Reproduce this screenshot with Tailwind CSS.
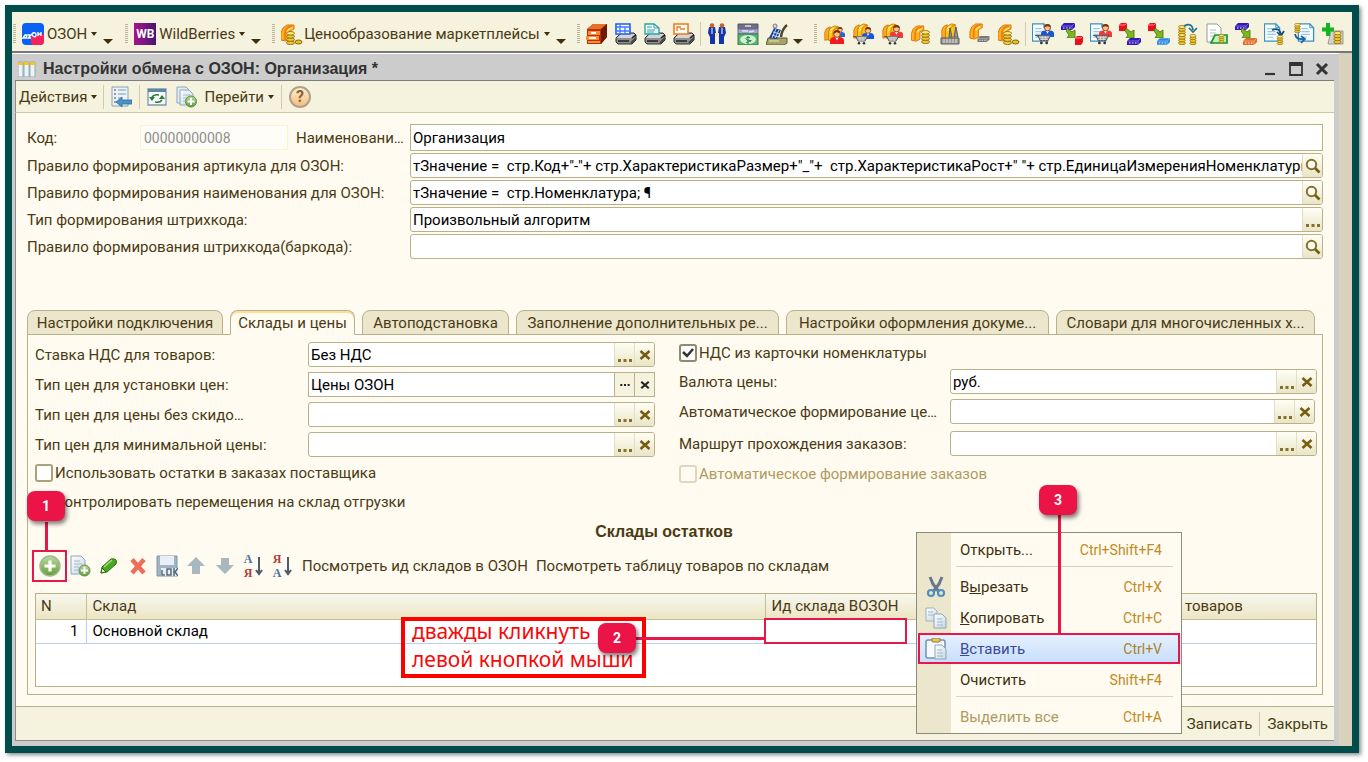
<!DOCTYPE html>
<html lang="ru">
<head>
<meta charset="utf-8">
<title>Настройки обмена с ОЗОН</title>
<script src="https://cdn.jsdelivr.net/npm/@tailwindcss/browser@4"></script>
</head>
<body class="bg-white font-[Roboto,'Liberation_Sans',sans-serif] text-[15px] leading-5 text-[#4a3a14]">

<svg class="absolute size-0" aria-hidden="true">
  <defs>
    <linearGradient id="gGreen" x1="0" y1="0" x2="0" y2="1"><stop offset="0" stop-color="#b9d99b"/><stop offset="1" stop-color="#5fa03a"/></linearGradient>
    <linearGradient id="gDoc" x1="0" y1="0" x2="1" y2="1"><stop offset="0" stop-color="#ffffff"/><stop offset="1" stop-color="#c5d6e2"/></linearGradient>
  </defs>
  <symbol id="books" viewBox="0 0 18 19"><path d="M1 8Q2 3 7 2v14l-6 1z" fill="#ffae1a" stroke="#e06c10"/><path d="M5 8Q6 3 12 1l4 1v13l-6 3-5-1z" fill="#ffc21a" stroke="#c87a10"/><path d="M10 18V8q1-4 6-6" fill="none" stroke="#d98a06" stroke-width="1.300"/><path d="M7 6l4-3M7 9l2-2" stroke="#fff07a" stroke-width="1.500"/></symbol>
  <symbol id="halfbook" viewBox="0 0 18 19"><path d="M1 9Q2 3 7 1h7v4l-4 2v8l-4 2-5-1z" fill="#ffb31a" stroke="#dc7410"/><path d="M5 16V8q1-5 7-6" fill="none" stroke="#f07a18" stroke-width="1.800"/><path d="M7 8q1-3 5-4" stroke="#ffe66a" stroke-width="1.500" fill="none"/></symbol>
  <symbol id="coins" viewBox="0 0 9 14"><g fill="#f0c832" stroke="#80600a" stroke-width=".8"><ellipse cx="4.500" cy="11.800" rx="4" ry="1.800"/><ellipse cx="4.500" cy="8.600" rx="4" ry="1.800"/><ellipse cx="4.500" cy="5.400" rx="4" ry="1.800"/><ellipse cx="4.500" cy="2.300" rx="4" ry="1.800" fill="#ffe878"/></g></symbol>
  <symbol id="cart" viewBox="0 0 16 9"><path d="M0 0l3 1 2 4h7l3-5z" fill="#a4a4a4" stroke="#555"/><path d="M4 2h9M5 4h7M7 1v4M10 1v4" stroke="#e4e4e4" stroke-width=".7"/><circle cx="6" cy="7.300" r="1.300" fill="#333"/><circle cx="11" cy="7.300" r="1.300" fill="#333"/></symbol>
  <symbol id="person" viewBox="0 0 12 12"><path d="M0 12V9q0-3 4-3h4q4 0 4 3v3z" fill="currentColor"/><path d="M4.500 6L6 9l1.500-3z" fill="#fff"/><circle cx="6" cy="3.500" r="2.800" fill="#fbc38c" stroke="#8a3a10" stroke-width=".8"/><path d="M3 3q0-3 3-3t3 3l-3-1z" fill="#7a3210"/></symbol>
  <symbol id="sheet" viewBox="0 0 18 20"><path d="M1 1h12l4 4v14H1z" fill="#f6fcff" stroke="#3a8fc4" stroke-width="1.400"/><path d="M13 1v4h4" fill="none" stroke="#3a8fc4"/><path d="M4 6h7M4 9h9M4 12h9M4 15h6" stroke="#9cc8e4" stroke-width="1.300"/></symbol>
  <symbol id="chip" viewBox="0 0 14 7"><path d="M0 3l3-3h11v4l-3 3H0z" fill="currentColor"/><path d="M0 3h11l3-3M11 3v4" stroke="#fff" stroke-opacity=".5" stroke-width=".7" fill="none"/><path d="M2 5h1.500M5 5h1.500M8 5h1.500" stroke="#fff" stroke-width="1"/></symbol>
  <symbol id="garrow" viewBox="0 0 10 10"><path d="M1 0l5 4 3-2v8H1l2-3-3-4z" fill="#7db81e" stroke="#456f08" stroke-width=".8"/></symbol>
  <symbol id="printer" viewBox="0 0 22 22"><path d="M1 15l5-5h13l2 2v5l-4 4H3l-2-2z" fill="#8f8f8f" stroke="#333"/><path d="M2 15l4-4h14l-4 4z" fill="#d4d4d4"/><path d="M3 18h11M17 15l4-3" stroke="#222" stroke-width="1.500"/><path d="M16 20l5-5" stroke="#444" stroke-width="1.800"/></symbol>
  <symbol id="docplus" viewBox="0 0 22 22"><path d="M1 1h9l3 3v13H1z" fill="#e4edf2" stroke="#8ba8ba"/><path d="M4 4h9l4 4v11H4z" fill="url(#gDoc)" stroke="#8ba8ba"/><path d="M7 9h7M7 12h5M7 15h4" stroke="#9db9ca"/><circle cx="15" cy="15.500" r="5.500" fill="url(#gGreen)" stroke="#5d8c48"/><path d="M15 12v7M11.500 15.500h7" stroke="#fff" stroke-width="2"/></symbol>
  <symbol id="lens" viewBox="0 0 16 16"><circle cx="6.500" cy="6.500" r="4.700" fill="#fffdf2" stroke="#85712c" stroke-width="2"/><path d="M10 10l4.500 4.500" stroke="#765c0f" stroke-width="2.600"/></symbol>
  <symbol id="cross" viewBox="0 0 12 12"><path d="M1.500 2l9 8M10.500 2l-9 8" stroke="currentColor" stroke-width="2.500"/></symbol>
  <symbol id="dots" viewBox="0 0 14 3"><path d="M0 0h3v3H0zM5.500 0h3v3h-3zM11 0h3v3h-3z" fill="currentColor"/></symbol>
  <symbol id="caret" viewBox="0 0 6 4"><path d="M0 0h6L3 4z" fill="#3e300e"/></symbol>
  <symbol id="more" viewBox="0 0 10 5"><path d="M0 0h10L5 5z" fill="#3e300e"/></symbol>
</svg>

<div class="flex min-h-screen pt-[5px] pr-[9px] pb-[9px] pl-[5px]">
<div class="flex flex-1 flex-col border-[7px] border-[#004d4b] bg-[#f5f2dd] shadow-[2px_2px_4px_rgba(0,0,0,0.45)]">

  <!-- Application toolbars -->
  <nav class="flex h-[41px] items-center border-b-2 border-[#77767a] pt-1 pr-[3px] whitespace-nowrap [&_svg]:shrink-0" aria-label="Панели">
    <span class="mx-px h-5 w-[3px] bg-[repeating-linear-gradient(#b9b498_0_1px,transparent_1px_2px)]"></span>
    <button class="ml-[5px] flex items-center"><svg class="size-[22px]" viewBox="0 0 22 22"><rect width="22" height="22" rx="4" fill="#0b60f5"/><path d="M9 14l13-3v7q0 4-4 4H10q-2-4-1-8z" fill="#f5225c"/><path d="M1 15l2-3h2l-1 3zM6 12h3l-3 3h3M11 10q3-1 3 2t-3 1q-2-2 0-3M16 13V9M16 11h3M19 13V9" stroke="#fff" stroke-width="1.400" fill="none"/></svg><span class="ml-[3px]">ОЗОН</span><svg class="ml-1 h-1 w-1.5"><use href="#caret"/></svg></button>
    <button class="mt-4 ml-1.5" aria-label="Ещё ОЗОН"><svg class="h-[5px] w-2.5"><use href="#more"/></svg></button>
    <span class="ml-3 h-5 w-[3px] bg-[repeating-linear-gradient(#b9b498_0_1px,transparent_1px_2px)]"></span>
    <button class="ml-1.5 flex items-center"><span class="flex size-[22px] items-center justify-center bg-linear-to-r from-[#a8108c] to-[#4a1170] text-[12px] font-bold text-white">WB</span><span class="ml-[3px]">WildBerries</span><svg class="ml-1 h-1 w-1.5"><use href="#caret"/></svg></button>
    <button class="mt-4 ml-1.5" aria-label="Ещё WildBerries"><svg class="h-[5px] w-2.5"><use href="#more"/></svg></button>
    <span class="ml-[11px] h-5 w-[3px] bg-[repeating-linear-gradient(#b9b498_0_1px,transparent_1px_2px)]"></span>
    <button class="ml-1.5 flex items-center"><svg class="size-[22px]" viewBox="0 0 22 22"><use href="#halfbook" width="18" height="19" x="-1" y="1"/><use href="#coins" x="5" y="8" width="9" height="14"/><ellipse cx="17.500" cy="19" rx="3.500" ry="2" fill="#e9bd2c" stroke="#8a6508"/></svg><span class="ml-px">Ценообразование маркетплейсы</span><svg class="ml-1 h-1 w-1.5"><use href="#caret"/></svg></button>
    <button class="mt-4 ml-1.5" aria-label="Ещё цены"><svg class="h-[5px] w-2.5"><use href="#more"/></svg></button>
    <span class="ml-[11px] h-5 w-[3px] bg-[repeating-linear-gradient(#b9b498_0_1px,transparent_1px_2px)]"></span>

    <div class="ml-1.5 flex items-center gap-[7px] [&_svg]:size-[22px]">
      <button aria-label="Архив"><svg viewBox="0 0 22 22"><path d="M1 6l6-5h14v13l-6 7H1z" fill="#b5320c"/><path d="M7 1h14l-6 5H1z" fill="#e8702a"/><path d="M21 1v13l-6 7V6z" fill="#6e1b06"/><path d="M2 8h12v4H2zM0 13h13v4H0zM2 18h12v2H2z" fill="#ff8b2c"/><path d="M5 9h5v2H5zM3 14h7v2H3z" fill="#fff"/></svg></button>
      <button aria-label="Печать таблицы"><svg viewBox="0 0 22 22"><use href="#printer"/><path d="M1 1h14v10H1z" fill="#fff" stroke="#1d5cf0" stroke-width="1.600"/><path d="M1 4h14M1 8h14M5 1v10M10 4v7" stroke="#3a78ff" stroke-width="1.300"/></svg></button>
      <button aria-label="Печать документа"><svg viewBox="0 0 22 22"><use href="#printer"/><path d="M1 1h9l5 4v6H1z" fill="#f4ffff" stroke="#2aa0a8" stroke-width="1.400"/><path d="M10 1v4h4M3 4h5M3 7h8M3 9h7" stroke="#2aa0a8" fill="none"/></svg></button>
      <button aria-label="Печать этикетки"><svg viewBox="0 0 22 22"><use href="#printer"/><path d="M1 1h14v10H1z" fill="#fff" stroke="#f07a14" stroke-width="1.600"/><path d="M4 8V4h4M7 6h5" stroke="#f07a14" stroke-width="1.400" fill="none"/></svg></button>
    </div>
    <span class="mx-[5px] h-6 w-px bg-[#cfcab0]"></span>
    <div class="flex items-center gap-[7px] [&_svg]:size-[22px]">
      <button aria-label="Контрагенты"><svg viewBox="0 0 22 22"><path d="M3 4h6l1 6-1 4v7H4v-7L2 10zM13 4h6l1 6-2 4v7h-5v-7l-1-4z" fill="#1236a8"/><path d="M9 10h4v3H9z" fill="#fbe0c0"/><path d="M6 5v6M16 5v6" stroke="#fff"/><circle cx="6" cy="2.500" r="2.300" fill="#c8622c"/><circle cx="16" cy="2.500" r="2.300" fill="#c8622c"/></svg></button>
      <button class="ml-0.5" aria-label="Деньги"><svg viewBox="0 0 22 22"><path d="M1 1h20v5H1z" fill="#6f6f80" stroke="#55556a"/><path d="M1 6h20v5H1z" fill="#a2a2cc" stroke="#7070a0"/><path d="M8 3h6M5 8h6M12 9l5-1" stroke="#e0e0f4" stroke-width="1.500" fill="none"/><path d="M1 11h20v11H1z" fill="#5fae72" stroke="#2f7d4c"/><ellipse cx="11" cy="16.500" rx="8" ry="4.500" fill="#c6f2cc"/><path d="M13 14.500q-4-1-4 1t4 2-4 2M11 13v8" stroke="#2f7d4c" fill="none"/></svg></button>
      <button aria-label="Касса"><svg viewBox="0 0 22 22"><path d="M2 15h19v5l-3 2H0z" fill="#a5a26a" stroke="#5c5a34"/><path d="M3 18h10" stroke="#e8e6bc"/><path d="M3 15L8 5l7 2-4 9z" fill="#173f96"/><path d="M6 12l6 2M7 9l7 2M10 6l-4 9M13 7l-4 8" stroke="#c8d6f4"/><path d="M21 2q-5 4-6 12" stroke="#4c4a22" stroke-width="2.500" fill="none"/><circle cx="9" cy="3" r="2" fill="#ddd" stroke="#777"/></svg></button>
    </div>
    <button class="mt-4 ml-[5px]" aria-label="Ещё"><svg class="h-[5px] w-2.5"><use href="#more"/></svg></button>
    <span class="ml-[11px] h-5 w-[3px] bg-[repeating-linear-gradient(#b9b498_0_1px,transparent_1px_2px)]"></span>

    <div class="ml-[7px] flex items-center gap-[7px] [&_svg]:size-[22px]">
      <button aria-label="Отчёт по покупателям"><svg viewBox="0 0 22 22"><use href="#books" width="18" height="17" x="-1" y="2"/><use href="#person" x="11" y="4" width="10" height="10" class="text-[#1e6ad0]"/><use href="#person" x="6" y="7" width="14" height="14" class="text-[#f01c1c]"/></svg></button>
      <button aria-label="Отчёт о закупках"><svg viewBox="0 0 22 22"><use href="#books" width="16" height="17"/><use href="#person" x="9" y="4" width="12" height="12" class="text-[#1656e0]"/><use href="#cart" x="0" y="13" width="16" height="9"/></svg></button>
      <button aria-label="Отчёт о продажах"><svg viewBox="0 0 22 22"><use href="#books" width="16" height="17"/><use href="#person" x="8" y="2" width="13" height="13" class="text-[#ee3a3a]"/><use href="#cart" x="2" y="13" width="16" height="9"/></svg></button>
      <button aria-label="Учёт денег"><svg viewBox="0 0 22 22"><use href="#halfbook" width="18" height="18" x="-1" y="2"/><use href="#coins" x="10" y="7" width="9" height="14"/></svg></button>
      <button aria-label="Производство"><svg viewBox="0 0 22 22"><use href="#books" width="18" height="17"/><path d="M1 15h18v6H1zM9 14l1-9 2 9zM14 14l2-10 2 10z" fill="#999" stroke="#5c5c5c"/><path d="M3 17h15M3 19h15" stroke="#ddd" stroke-dasharray="2 1"/></svg></button>
      <button aria-label="Складской отчёт"><svg viewBox="0 0 22 22"><use href="#halfbook" width="17" height="18"/><use href="#chip" x="8" y="13" width="13" height="6" class="text-[#777]"/></svg></button>
      <button aria-label="Себестоимость"><svg viewBox="0 0 22 22"><use href="#halfbook" width="18" height="19" x="-1" y="1"/><use href="#coins" x="5" y="8" width="9" height="14"/><ellipse cx="17.500" cy="19" rx="3.500" ry="2" fill="#e9bd2c" stroke="#8a6508"/></svg></button>
    </div>
    <span class="mr-[6px] ml-[5px] h-6 w-px bg-[#cfcab0]"></span>
    <div class="flex items-center gap-[7px] [&_svg]:size-[22px]">
      <button aria-label="Заказ поставщику"><svg viewBox="0 0 22 22"><use href="#sheet" width="18" height="19" x="-1"/><use href="#person" x="9" y="1" width="13" height="13" class="text-[#1656e0]"/><use href="#cart" x="3" y="12" width="17" height="10"/></svg></button>
      <button aria-label="Поступление"><svg viewBox="0 0 22 22"><use href="#chip" width="14" height="7" class="text-[#3218b8]"/><use href="#garrow" x="5" y="5" width="10" height="10"/><path d="M14 15l2-2h6v6l-2 3h-6z" fill="#e8101c"/><path d="M14 15h6l2-2" stroke="#ff8a8a" fill="none"/></svg></button>
      <button aria-label="Заказ покупателя"><svg viewBox="0 0 22 22"><use href="#sheet" width="18" height="19" x="-1"/><use href="#person" x="9" y="1" width="13" height="13" class="text-[#f03a3a]"/><use href="#cart" x="3" y="12" width="17" height="10"/></svg></button>
      <button aria-label="Реализация"><svg viewBox="0 0 22 22"><path d="M0 2l2-2h6v6L6 8H0z" fill="#e8101c"/><path d="M0 2h6l2-2" stroke="#ff8a8a" fill="none"/><use href="#garrow" x="6" y="5" width="10" height="10"/><use href="#chip" x="8" y="15" width="14" height="7" class="text-[#3218b8]"/></svg></button>
      <button aria-label="Возврат"><svg viewBox="0 0 22 22"><path d="M0 2l2-2h6v6L6 8H0z" fill="#e8101c"/><path d="M0 2h6l2-2" stroke="#ff8a8a" fill="none"/><use href="#garrow" x="6" y="5" width="10" height="10"/><use href="#chip" x="9" y="15" width="13" height="7" class="text-[#2a86e8]"/></svg></button>
      <button aria-label="Обмен денег"><svg viewBox="0 0 22 22"><use href="#coins" x="1" y="2" width="8" height="12"/><use href="#coins" x="1" y="10" width="8" height="12"/><use href="#coins" x="12" y="11" width="8" height="11"/><path d="M7 3q8-4 9 4M12 5l4 4 4-4" fill="none" stroke="#23718a" stroke-width="1.700"/></svg></button>
      <button aria-label="Кассовый ордер"><svg viewBox="0 0 22 22"><path d="M1 1h10l4 4v14H1z" fill="#fff" stroke="#999"/><path d="M4 7h6M4 10h6M4 13h5" stroke="#bbb"/><path d="M5 20l4-8h12v8z" fill="#c8f0bd" stroke="#199428" stroke-width="1.700"/><use href="#coins" x="12" y="11" width="7" height="9"/></svg></button>
      <button aria-label="Перемещение"><svg viewBox="0 0 22 22"><use href="#chip" width="14" height="7" class="text-[#3218b8]"/><use href="#garrow" x="6" y="5" width="10" height="10"/><use href="#chip" x="8" y="15" width="14" height="7" class="text-[#e07028]"/></svg></button>
      <button aria-label="Оплата"><svg viewBox="0 0 22 22"><use href="#sheet" width="18" height="19" x="-1"/><path d="M8 7q8-3 9 5M13 9l4 4 3-5" fill="none" stroke="#0f4f7c" stroke-width="1.700"/><use href="#coins" x="12" y="12" width="8" height="10"/></svg></button>
      <button aria-label="Платёжное поручение"><svg viewBox="0 0 22 22"><use href="#sheet" x="4" width="18" height="19"/><use href="#coins" x="1" width="7" height="10"/><path d="M2 11q1 6 9 5M8 13l4 3-4 4" fill="none" stroke="#1a63a0" stroke-width="1.700"/></svg></button>
      <button aria-label="Добавить оплату"><svg viewBox="0 0 22 22"><path d="M6 21l3-13h12v13z" fill="#d4d4c8" stroke="#999"/><use href="#coins" x="11" y="8" width="9" height="13"/><path d="M6 0v13M0 6.500h12" stroke="#12b422" stroke-width="4"/></svg></button>
    </div>
  </nav>

  <!-- Document window -->
  <div class="flex flex-1 bg-[#d8d2bc]">
  <main class="mr-[13px] flex min-w-0 flex-1 flex-col border-t border-white bg-[#cccccc] pr-[5px] pb-[5px] pl-[3px]">
    <header class="flex h-[27px] items-center border-b border-[#7d7d80] pt-1">
      <svg class="ml-[3px] h-4 w-[18px]" viewBox="0 0 18 16"><path d="M0 1h5v15H0zM6 1h5v15H6zM12 1h5v15h-5z" fill="#eef4f6" stroke="#8fa8b0"/><path d="M0 1h5v3H0zM6 1h5v3H6zM12 1h5v3h-5z" fill="#f2c230"/></svg>
      <h1 class="ml-[7px] font-['Liberation_Sans',sans-serif] text-[16px] font-bold text-[#333]">Настройки обмена с ОЗОН: Организация *</h1>
      <div class="mr-[5px] ml-auto flex items-center gap-3 text-[#333]">
        <button aria-label="Свернуть"><svg class="size-3.5" viewBox="0 0 14 14"><path d="M2 12h10" stroke="currentColor" stroke-width="2.200"/></svg></button>
        <button aria-label="Развернуть"><svg class="size-3.5" viewBox="0 0 14 14"><path d="M1 1h12v12H1z" fill="none" stroke="currentColor" stroke-width="1.800"/><path d="M1 3h12" stroke="currentColor" stroke-width="2"/></svg></button>
        <button aria-label="Закрыть окно"><svg class="size-3.5" viewBox="0 0 14 14"><path d="M2 2l10 10M12 2L2 12" stroke="currentColor" stroke-width="3"/></svg></button>
      </div>
    </header>

    <div class="flex h-8 items-center border-b border-l border-l-[#8d8d90] border-b-[#cdc7a4] bg-[#f5f2dd] [&_svg]:shrink-0">
      <button class="ml-[3px] flex items-center">Действия<svg class="ml-1 h-1 w-1.5"><use href="#caret"/></svg></button>
      <span class="mx-1.5 h-6 w-px bg-[#cfcab0]"></span>
      <button aria-label="Выбрать"><svg class="size-[22px]" viewBox="0 0 22 22"><path d="M2 1h16v19H2z" fill="#eaf2f7" stroke="#8aa4b4"/><path d="M4 4h2M4 8h2M4 12h2M4 16h2" stroke="#444"/><path d="M8 4h8M8 8h8M8 12h4" stroke="#9dbbcc" stroke-width="1.400"/><path d="M6 16l6-5v3h10v4H12v3z" fill="#4a93c8" stroke="#2b6c9c" stroke-width=".8"/></svg></button>
      <span class="mx-[7px] h-6 w-px bg-[#cfcab0]"></span>
      <button aria-label="Обновить"><svg class="size-5" viewBox="0 0 20 20"><path d="M1 2h18v16H1z" fill="#f4f8fa" stroke="#7b98ac" stroke-width="1.300"/><path d="M1 2h18v3H1z" fill="#5d86a4"/><path d="M5 10q2-3 7-2M15 13q-2 3-7 2" fill="none" stroke="#2d7a34" stroke-width="1.600"/><path d="M2 10h6l-3 4zM12 12h6l-3-4z" fill="#2d7a34"/></svg></button>
      <button class="ml-[9px]" aria-label="Добавить копированием"><svg class="size-[22px]"><use href="#docplus"/></svg></button>
      <button class="ml-1.5 flex items-center">Перейти<svg class="ml-1 h-1 w-1.5"><use href="#caret"/></svg></button>
      <span class="mx-[7px] h-6 w-px bg-[#cfcab0]"></span>
      <button class="flex size-[22px] items-center justify-center rounded-full border-2 border-[#b0a08c] bg-linear-to-b from-[#ffefcb] to-[#f3bd80] text-base font-bold text-[#8b6238]" aria-label="Справка">?</button>
    </div>

    <form class="flex flex-1 flex-col border-l border-[#8d8d90] bg-[#fffbf0]">
      <section class="mt-[11px] mr-[11px] ml-[11px] flex flex-col gap-0.5 [&_label]:shrink-0">
        <div class="flex h-[27px] items-center">
          <label for="code" class="w-[113px]">Код:</label>
          <input id="code" disabled value="00000000008" class="h-[25px] w-[148px] border border-[#fbf3cf] bg-[#fffdf8] px-[3px] text-sm text-[#8e8e8e]">
          <label for="name" class="ml-2 w-[114px]">Наименовани…</label>
          <input id="name" value="Организация" class="h-full min-w-0 flex-1 border border-[#b8b18a] bg-white px-0.5 text-black">
        </div>
        <div class="flex h-[25px] items-center">
          <label for="r1" class="w-[383px]">Правило формирования артикула для ОЗОН:</label>
          <div class="flex h-full min-w-0 flex-1 overflow-hidden rounded-[3px] border border-[#b8b18a] bg-white"><input id="r1" value='тЗначение =  стр.Код+"-"+ стр.ХарактеристикаРазмер+"_"+  стр.ХарактеристикаРост+" "+ стр.ЕдиницаИзмеренияНоменклатуры' class="min-w-0 flex-1 pl-0.5 text-black"><button type="button" class="flex w-5 items-center justify-center border-l border-[#e3dfc3] bg-linear-to-b from-[#fffef6] to-[#e9e5c6]" aria-label="Открыть"><svg class="size-4"><use href="#lens"/></svg></button></div>
        </div>
        <div class="flex h-[25px] items-center">
          <label for="r2" class="w-[383px]">Правило формирования наименования для ОЗОН:</label>
          <div class="flex h-full min-w-0 flex-1 overflow-hidden rounded-[3px] border border-[#b8b18a] bg-white"><input id="r2" value="тЗначение =  стр.Номенклатура; ¶" class="min-w-0 flex-1 pl-0.5 text-black"><button type="button" class="flex w-5 items-center justify-center border-l border-[#e3dfc3] bg-linear-to-b from-[#fffef6] to-[#e9e5c6]" aria-label="Открыть"><svg class="size-4"><use href="#lens"/></svg></button></div>
        </div>
        <div class="flex h-[25px] items-center">
          <label for="r3" class="w-[383px]">Тип формирования штрихкода:</label>
          <div class="flex h-full min-w-0 flex-1 overflow-hidden rounded-[3px] border border-[#b8b18a] bg-white"><input id="r3" value="Произвольный алгоритм" class="min-w-0 flex-1 pl-0.5 text-black"><button type="button" class="flex w-5 items-end justify-center border-l border-[#e3dfc3] bg-linear-to-b from-[#fffef6] to-[#e9e5c6] pb-1 text-[#85712c]" aria-label="Выбрать"><svg class="h-[3px] w-3.5"><use href="#dots"/></svg></button></div>
        </div>
        <div class="flex h-[25px] items-center">
          <label for="r4" class="w-[383px]">Правило формирования штрихкода(баркода):</label>
          <div class="flex h-full min-w-0 flex-1 overflow-hidden rounded-[3px] border border-[#b8b18a] bg-white"><input id="r4" class="min-w-0 flex-1 pl-0.5 text-black"><button type="button" class="flex w-5 items-center justify-center border-l border-[#e3dfc3] bg-linear-to-b from-[#fffef6] to-[#e9e5c6]" aria-label="Открыть"><svg class="size-4"><use href="#lens"/></svg></button></div>
        </div>
      </section>

      <div class="z-10 mt-[51px] -mb-px ml-[11px] flex h-[25px] gap-[7px] [&>button]:truncate [&>button]:rounded-t-lg [&>button]:border [&>button]:border-[#b8b18a]" role="tablist">
        <button type="button" role="tab" class="w-[196px] bg-[#ebe6cc]">Настройки подключения</button>
        <button type="button" role="tab" aria-selected="true" class="w-[125px] border-b-[#fffbf0]! bg-[#fffbf0] shadow-[inset_0_2px_0_#ffdf98]">Склады и цены</button>
        <button type="button" role="tab" class="w-[147px] bg-[#ebe6cc]">Автоподстановка</button>
        <button type="button" role="tab" class="w-[263px] bg-[#ebe6cc]">Заполнение дополнительных ре...</button>
        <button type="button" role="tab" class="w-[263px] bg-[#ebe6cc]">Настройки оформления докуме...</button>
        <button type="button" role="tab" class="w-[259px] bg-[#ebe6cc]">Словари для многочисленных х...</button>
      </div>

      <section class="relative mr-[11px] mb-[11px] ml-[11px] flex flex-1 flex-col border border-[#b8b18a] pt-[7px] pr-[5px] pb-[7px] pl-[7px]">
        <div class="grid grid-cols-[620fr_638fr] gap-6 [&_label]:shrink-0">
          <div class="flex flex-col gap-[5px]">
            <div class="flex h-[25px] items-center">
              <label for="vat" class="w-[273px]">Ставка НДС для товаров:</label>
              <div class="flex h-full min-w-0 flex-1 overflow-hidden rounded-[3px] border border-[#b8b18a] bg-white"><input id="vat" value="Без НДС" class="min-w-0 flex-1 pl-0.5 text-black"><button type="button" class="flex w-5 items-end justify-center border-l border-[#e3dfc3] bg-linear-to-b from-[#fffef6] to-[#e9e5c6] pb-1 text-[#85712c]" aria-label="Выбрать"><svg class="h-[3px] w-3.5"><use href="#dots"/></svg></button><button type="button" class="flex w-5 items-center justify-center border-l border-[#e3dfc3] bg-linear-to-b from-[#fffef6] to-[#e9e5c6] text-[#765c0f]" aria-label="Очистить"><svg class="size-3"><use href="#cross"/></svg></button></div>
            </div>
            <div class="flex h-[25px] items-center">
              <label for="price" class="w-[273px]">Тип цен для установки цен:</label>
              <div class="flex h-full min-w-0 flex-1 border border-[#b8b18a] bg-white"><input id="price" value="Цены ОЗОН" class="min-w-0 flex-1 pl-0.5 text-black"><button type="button" class="flex w-5 items-center justify-center border-l border-[#b8b18a] bg-[#f5f2dd] text-[#222]" aria-label="Выбрать"><svg class="h-0.5 w-2.5"><use href="#dots"/></svg></button><button type="button" class="flex w-5 items-center justify-center border-l border-[#b8b18a] bg-[#f5f2dd] text-[#222]" aria-label="Очистить"><svg class="size-2.5"><use href="#cross"/></svg></button></div>
            </div>
            <div class="flex h-[25px] items-center">
              <label for="nodisc" class="w-[273px]">Тип цен для цены без скидо…</label>
              <div class="flex h-full min-w-0 flex-1 overflow-hidden rounded-[3px] border border-[#b8b18a] bg-white"><input id="nodisc" class="min-w-0 flex-1 pl-0.5 text-black"><button type="button" class="flex w-5 items-end justify-center border-l border-[#e3dfc3] bg-linear-to-b from-[#fffef6] to-[#e9e5c6] pb-1 text-[#85712c]" aria-label="Выбрать"><svg class="h-[3px] w-3.5"><use href="#dots"/></svg></button><button type="button" class="flex w-5 items-center justify-center border-l border-[#e3dfc3] bg-linear-to-b from-[#fffef6] to-[#e9e5c6] text-[#765c0f]" aria-label="Очистить"><svg class="size-3"><use href="#cross"/></svg></button></div>
            </div>
            <div class="flex h-[25px] items-center">
              <label for="minp" class="w-[273px]">Тип цен для минимальной цены:</label>
              <div class="flex h-full min-w-0 flex-1 overflow-hidden rounded-[3px] border border-[#b8b18a] bg-white"><input id="minp" class="min-w-0 flex-1 pl-0.5 text-black"><button type="button" class="flex w-5 items-end justify-center border-l border-[#e3dfc3] bg-linear-to-b from-[#fffef6] to-[#e9e5c6] pb-1 text-[#85712c]" aria-label="Выбрать"><svg class="h-[3px] w-3.5"><use href="#dots"/></svg></button><button type="button" class="flex w-5 items-center justify-center border-l border-[#e3dfc3] bg-linear-to-b from-[#fffef6] to-[#e9e5c6] text-[#765c0f]" aria-label="Очистить"><svg class="size-3"><use href="#cross"/></svg></button></div>
            </div>
            <label class="flex h-[22px] items-center gap-0.5"><input type="checkbox" class="size-[18px] appearance-none rounded-[3px] border-2 border-[#aaa27c] bg-white">Использовать остатки в заказах поставщика</label>
            <label class="mt-0.5 flex h-[22px] items-center gap-0.5"><input type="checkbox" class="size-[18px] appearance-none rounded-[3px] border-2 border-[#aaa27c] bg-white">Контролировать перемещения на склад отгрузки</label>
          </div>

          <div class="flex flex-col gap-[5px]">
            <label class="relative flex h-[22px] items-center gap-0.5"><input type="checkbox" checked class="size-[18px] appearance-none rounded-[3px] border-2 border-[#8f8a70] bg-white"><svg class="absolute left-[3px] size-3" viewBox="0 0 12 12"><path d="M1 5l4 4 6-7" fill="none" stroke="#333" stroke-width="2.500"/></svg>НДС из карточки номенклатуры</label>
            <div class="flex h-[25px] items-center">
              <label for="cur" class="w-[271px]">Валюта цены:</label>
              <div class="flex h-full min-w-0 flex-1 overflow-hidden rounded-[3px] border border-[#b8b18a] bg-white"><input id="cur" value="руб." class="min-w-0 flex-1 pl-0.5 text-black"><button type="button" class="flex w-5 items-end justify-center border-l border-[#e3dfc3] bg-linear-to-b from-[#fffef6] to-[#e9e5c6] pb-1 text-[#85712c]" aria-label="Выбрать"><svg class="h-[3px] w-3.5"><use href="#dots"/></svg></button><button type="button" class="flex w-5 items-center justify-center border-l border-[#e3dfc3] bg-linear-to-b from-[#fffef6] to-[#e9e5c6] text-[#765c0f]" aria-label="Очистить"><svg class="size-3"><use href="#cross"/></svg></button></div>
            </div>
            <div class="mr-0.5 flex h-[25px] items-center">
              <label for="auto" class="w-[271px]">Автоматическое формирование це…</label>
              <div class="flex h-full min-w-0 flex-1 overflow-hidden rounded-[3px] border border-[#b8b18a] bg-white"><input id="auto" class="min-w-0 flex-1 pl-0.5 text-black"><button type="button" class="flex w-5 items-end justify-center border-l border-[#e3dfc3] bg-linear-to-b from-[#fffef6] to-[#e9e5c6] pb-1 text-[#85712c]" aria-label="Выбрать"><svg class="h-[3px] w-3.5"><use href="#dots"/></svg></button><button type="button" class="flex w-5 items-center justify-center border-l border-[#e3dfc3] bg-linear-to-b from-[#fffef6] to-[#e9e5c6] text-[#765c0f]" aria-label="Очистить"><svg class="size-3"><use href="#cross"/></svg></button></div>
            </div>
            <div class="mt-0.5 flex h-[25px] items-center">
              <label for="route" class="w-[271px]">Маршрут прохождения заказов:</label>
              <div class="flex h-full min-w-0 flex-1 overflow-hidden rounded-[3px] border border-[#b8b18a] bg-white"><input id="route" class="min-w-0 flex-1 pl-0.5 text-black"><button type="button" class="flex w-5 items-end justify-center border-l border-[#e3dfc3] bg-linear-to-b from-[#fffef6] to-[#e9e5c6] pb-1 text-[#85712c]" aria-label="Выбрать"><svg class="h-[3px] w-3.5"><use href="#dots"/></svg></button><button type="button" class="flex w-5 items-center justify-center border-l border-[#e3dfc3] bg-linear-to-b from-[#fffef6] to-[#e9e5c6] text-[#765c0f]" aria-label="Очистить"><svg class="size-3"><use href="#cross"/></svg></button></div>
            </div>
            <label class="mt-0.5 flex h-[22px] items-center gap-0.5 text-[#b09a62]"><input type="checkbox" disabled class="size-[18px] appearance-none rounded-[3px] border-2 border-[#ddd8c0] bg-[#fffbf0]">Автоматическое формирование заказов</label>
          </div>
        </div>

        <h2 class="mt-[9px] mr-6 text-center font-['Liberation_Sans',sans-serif] text-[16px] leading-5 font-bold">Склады остатков</h2>

        <div class="mt-[7px] flex h-[34px] items-center gap-[7px] [&_svg]:size-[22px] [&_svg]:shrink-0">
          <div class="relative -ml-[3px] flex h-8 w-[35px] items-center justify-center border-2 border-[#e8174a]">
            <button type="button" aria-label="Добавить"><svg viewBox="0 0 22 22"><circle cx="11" cy="11" r="10" fill="url(#gGreen)" stroke="#a6b49c" stroke-width="1.500"/><path d="M11 5.500v11M5.500 11h11" stroke="#fff" stroke-width="3.200"/></svg></button>
            <div class="absolute bottom-full left-[11px] h-[30px] w-[3px] bg-[#e8174a]"></div>
            <div class="absolute bottom-[59px] -left-[7px] flex h-[30px] w-[38px] items-center justify-center rounded-lg bg-[#ec1347] text-sm font-bold text-white shadow-[2px_3px_4px_rgba(0,0,0,0.5)]">1</div>
          </div>
          <button type="button" class="-ml-[5px]" aria-label="Скопировать"><svg viewBox="0 0 22 22"><path d="M2 1h10l4 4v14H2z" fill="url(#gDoc)" stroke="#8ba8ba"/><path d="M5 6h6M5 9h8M5 12h5M5 15h4" stroke="#9db9ca"/><circle cx="15.500" cy="15.500" r="5.500" fill="url(#gGreen)" stroke="#5d8c48"/><path d="M15.500 12v7M12 15.500h7" stroke="#fff" stroke-width="2"/></svg></button>
          <button type="button" aria-label="Изменить"><svg viewBox="0 0 22 22"><path d="M3 18l1-6 9-8q3-1 5 1 1 2 0 4l-9 8z" fill="#45a822" stroke="#287010"/><path d="M6 12l8-7" stroke="#a8e07c" stroke-width="1.500"/><path d="M3 18l1-5 4 4z" fill="#f3e0b4" stroke="#287010"/></svg></button>
          <button type="button" aria-label="Удалить"><svg viewBox="0 0 22 22"><path d="M5 4.500L17 18M17 4.500L5 18" stroke="#ee6c58" stroke-width="4.500"/></svg></button>
          <button type="button" aria-label="Записать строку"><svg viewBox="0 0 22 22"><path d="M1 1h20v20H1z" fill="#9fb4c4" stroke="#7f98aa"/><path d="M4 1h14v9H4z" fill="#e9f0f5"/><path d="M5 13h17v8H5z" fill="#e8eef2"/><path d="M6 15v5h3M11 14h4v6h-4zM18 13v8M22 13l-3 4 3 4" stroke="#55697a" stroke-width="1.500" fill="none"/></svg></button>
          <button type="button" aria-label="Вверх"><svg viewBox="0 0 22 22"><path d="M11 2l9 9h-5v8H7v-8H2z" fill="#a9b7bf"/></svg></button>
          <button type="button" aria-label="Вниз"><svg viewBox="0 0 22 22"><path d="M11 19l9-9h-5V3H7v7H2z" fill="#a9b7bf"/></svg></button>
          <button type="button" class="flex w-[22px] items-center" aria-label="Сортировать по возрастанию"><span class="flex w-2.5 flex-col font-['Liberation_Serif',serif] text-[12px] leading-[14px] font-bold"><span class="text-[#3f73a4]">А</span><span class="text-[#b43a3c]">Я</span></span><svg class="w-3!" viewBox="6 0 12 22"><path d="M12 2v17M9 15l3 4 3-4" fill="none" stroke="#4a5b6a" stroke-width="2"/></svg></button>
          <button type="button" class="flex w-[22px] items-center" aria-label="Сортировать по убыванию"><span class="flex w-2.5 flex-col font-['Liberation_Serif',serif] text-[12px] leading-[14px] font-bold"><span class="text-[#b43a3c]">Я</span><span class="text-[#3f73a4]">А</span></span><svg class="w-3!" viewBox="6 0 12 22"><path d="M12 2v17M9 15l3 4 3-4" fill="none" stroke="#4a5b6a" stroke-width="2"/></svg></button>
          <button type="button" class="ml-px">Посмотреть ид складов в ОЗОН</button>
          <button type="button" class="ml-px">Посмотреть таблицу товаров по складам</button>
        </div>

        <div class="mt-2.5 flex-1 border border-[#b8b18a] bg-white">
          <table class="w-full table-fixed border-collapse text-left">
            <colgroup><col class="w-[50px]"><col><col class="w-[143px]"><col class="w-[277px]"><col class="w-[131px]"></colgroup>
            <thead><tr class="h-[25px] bg-linear-to-b from-[#f8f7ee] to-[#ece5c3] [&>th]:border-b [&>th]:border-[#c3bd98] [&>th]:font-normal">
              <th class="border-r pl-[5px]">N</th><th class="border-r pl-1.5">Склад</th><th class="pl-1.5">Ид склада ВОЗОН</th><th></th><th>товаров</th>
            </tr></thead>
            <tbody><tr class="h-6 border-b border-[#b9d0ec] text-black">
              <td class="border-r border-[#b9d0ec] pr-[7px] text-right">1</td>
              <td class="pl-1.5">Основной склад</td>
              <td class="relative">
                <div class="absolute -top-[3px] right-[calc(100%+119px)] h-[61px] w-[245px] border-4 border-[#ff0000] pl-[7px] font-['Noto_Sans',sans-serif] text-[21px] leading-[28px] whitespace-nowrap text-[#f80808]"><p class="-mt-1">дважды кликнуть<br>левой кнопкой мыши</p></div>
                <div class="absolute top-[17px] right-full h-[3px] w-[130px] bg-[#e8174a]"></div>
                <div class="absolute top-[3px] right-[calc(100%+129px)] flex h-[30px] w-[38px] items-center justify-center rounded-lg bg-[#ec1347] text-sm font-bold text-white shadow-[2px_3px_4px_rgba(0,0,0,0.5)]">2</div>
                <div class="absolute -top-0.5 -left-px h-[26px] w-[143px] border-2 border-[#e8174a] bg-white"></div>
              </td><td></td><td></td>
            </tr></tbody>
          </table>
        </div>

        <!-- Context menu -->
        <div class="absolute right-[140px] -bottom-10 z-20 flex w-[266px] flex-col border border-[#8c8a80] bg-linear-to-r from-[#ebe6cc] from-[34px] to-[#fffbf0] to-[34px] py-px text-[#3e300e] [&_svg]:ml-2 [&_svg]:size-[22px] [&>button]:flex [&>button]:h-[31px] [&>button]:items-center [&>button]:pr-[19px]" role="menu">
          <button type="button" role="menuitem" class="pl-[43px]">Открыть...<span class="ml-auto text-sm text-[#c08a1c]">Ctrl+Shift+F4</span></button>
          <hr class="mt-px mr-2 mb-1 ml-[39px] border-[#d8d3be]">
          <button type="button" role="menuitem"><svg viewBox="0 0 22 22"><path d="M5 1l3 7 6 8M17 1l-3 7-6 8" stroke="#66788a" stroke-width="3" fill="none"/><circle cx="6" cy="17" r="3" fill="none" stroke="#4f8fc0" stroke-width="2.200"/><circle cx="16" cy="17" r="3" fill="none" stroke="#4f8fc0" stroke-width="2.200"/></svg><span class="ml-[13px]">В<u>ы</u>резать</span><span class="ml-auto text-sm text-[#c08a1c]">Ctrl+X</span></button>
          <button type="button" role="menuitem"><svg viewBox="0 0 22 22"><path d="M1 1h8l3 3v10H1z" fill="url(#gDoc)" stroke="#9fb2c0"/><path d="M3 5h5M3 8h5" stroke="#9db9ca"/><path d="M9 7h8l4 4v10H9z" fill="url(#gDoc)" stroke="#8fa6b6"/><path d="M12 12h5M12 15h6M12 18h6" stroke="#9db9ca"/></svg><span class="ml-[13px]"><u>К</u>опировать</span><span class="ml-auto text-sm text-[#c08a1c]">Ctrl+C</span></button>
          <button type="button" role="menuitem" class="relative bg-linear-to-b from-[#e8f1ff] to-[#c6ddfb] text-[#3b4a98]"><span class="absolute inset-x-px inset-y-0 border-2 border-[#e8174a]"></span><svg viewBox="0 0 22 22"><rect x="1" y="2" width="19" height="18" rx="2" fill="#f7fafc" stroke="#7891a5" stroke-width="1.500"/><rect x="7" y="0" width="8" height="4" rx="1" fill="#e8ca62" stroke="#8f7a2c"/><path d="M10 7h7l4 4v10H10z" fill="url(#gDoc)" stroke="#8fa6b6"/><path d="M12 12h5M12 15h6M12 18h6" stroke="#9db9ca"/></svg><span class="ml-[13px]"><u>В</u>ставить</span><span class="ml-auto text-sm text-[#a8842c]">Ctrl+V</span>
            <span class="absolute bottom-full left-[141px] h-[118px] w-[3px] bg-[#e8174a]"></span>
            <span class="absolute bottom-[149px] left-[122px] flex h-[30px] w-[38px] items-center justify-center rounded-lg bg-[#ec1347] text-sm font-bold text-white shadow-[2px_3px_4px_rgba(0,0,0,0.5)]">3</span></button>
          <button type="button" role="menuitem" class="pl-[43px]">Очистить<span class="ml-auto text-sm text-[#c08a1c]">Shift+F4</span></button>
          <hr class="mt-px mr-2 mb-1 ml-[39px] border-[#d8d3be]">
          <button type="button" role="menuitem" disabled class="pl-[43px] text-[#b09a62]">Вы<u>д</u>елить все<span class="ml-auto text-sm text-[#c08a1c]">Ctrl+A</span></button>
        </div>
      </section>

      <footer class="flex h-[35px] items-center justify-end border-t border-b border-t-[#b8b18a] border-b-[#8d8d90] bg-[#f5f2dd]">
        <button type="button">Записать</button>
        <span class="mx-[7px] h-6 w-px bg-[#cfcab0]"></span>
        <button type="button" class="mr-1.5">Закрыть</button>
      </footer>
    </form>
  </main>
  </div>
</div>
</div>
</body>
</html>
